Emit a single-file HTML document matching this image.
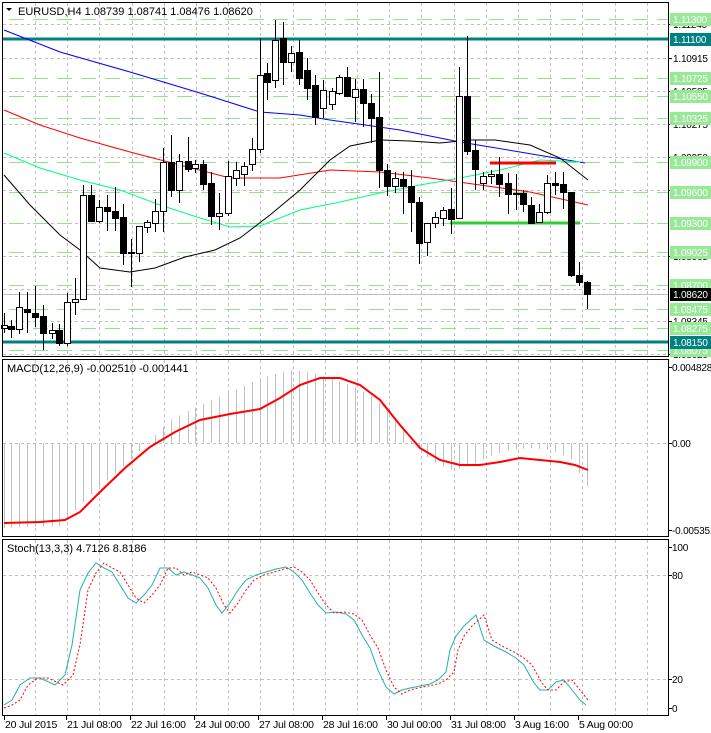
<!DOCTYPE html>
<html><head><meta charset="utf-8"><style>
html,body{margin:0;padding:0;background:#fff;width:711px;height:733px;overflow:hidden}
svg{display:block;font-family:"Liberation Sans",sans-serif}
</style></head><body>
<svg id="s" width="711" height="733" viewBox="0 0 711 733" xmlns="http://www.w3.org/2000/svg">
<rect width="711" height="733" fill="#fff"/>
<g id="grid" stroke="#c0c0c0" stroke-dasharray="3,3" stroke-width="1"></g>
<g id="main"></g>
<g id="labels" font-size="10" letter-spacing="-0.2"></g>
<g fill="none" stroke="#000" stroke-width="1">
<rect x="2.5" y="2.5" width="666" height="354"/>
<rect x="2.5" y="359.5" width="666" height="177"/>
<rect x="2.5" y="539.5" width="666" height="176"/>
</g>
<text x="18" y="15" font-size="11" fill="#000">EURUSD,H4  1.08739 1.08741 1.08476 1.08620</text>
<path d="M6 8 L12 8 L9 11 Z" fill="#000"/>
<text x="7" y="372" font-size="11" fill="#000">MACD(12,26,9) -0.002510 -0.001441</text>
<text x="7" y="552" font-size="11" fill="#000">Stoch(13,3,3) 4.7126 8.8186</text>
</svg>
<script>
const S=document.getElementById('s');
const NS='http://www.w3.org/2000/svg';
function el(p,t,a,txt){const e=document.createElementNS(NS,t);for(const k in a)e.setAttribute(k,a[k]);if(txt!==undefined)e.textContent=txt;(typeof p==='string'?document.getElementById(p):p).appendChild(e);return e;}
const grid='grid',main='main',lab='labels';
for(let i=0;i<20;i++){const x=Math.round(35+32.2*i)+.5;if(x>668)break;
 el(grid,'line',{x1:x,y1:3,x2:x,y2:356});el(grid,'line',{x1:x,y1:360,x2:x,y2:536});el(grid,'line',{x1:x,y1:540,x2:x,y2:715});}
const gy=[24,58,91,124,157,190,223,256,289,321,354];
gy.forEach(y=>el(grid,'line',{x1:3,y1:y+.5,x2:668,y2:y+.5}));
[443,575,679].forEach(y=>el(grid,'line',{x1:3,y1:y+.5,x2:668,y2:y+.5}));
[19,78,96,118,162,192,223,252,285,309,328,350].forEach(y=>el(main,'line',{x1:3,y1:y+.5,x2:668,y2:y+.5,stroke:'#90e090','stroke-width':1,'stroke-dasharray':'15,9','stroke-dashoffset':'-6'}));
el(main,'line',{x1:3,y1:294.5,x2:668,y2:294.5,stroke:'#c0c0c0'});
[39,342].forEach(y=>el(main,'line',{x1:3,y1:y,x2:668,y2:y,stroke:'#008080','stroke-width':3}));
function poly(pts,attrs){el(main,'polyline',Object.assign({points:pts.map(p=>p.join(',')).join(' '),fill:'none'},attrs));}
poly([[4,30],[60,52],[130,72],[200,93],[260,112],[300,115],[330,120],[400,130],[460,142],[520,152],[585,163]],{stroke:'#0000ff','stroke-width':1});
poly([[4,110],[40,125],[80,138],[130,152],[180,165],[230,178],[280,178],[330,170],[380,172],[430,178],[480,185],[530,192],[588,205]],{stroke:'#ff0000','stroke-width':1});
poly([[4,153],[40,168],[80,180],[120,190],[160,205],[200,218],[230,227],[260,226],[300,210],[340,202],[380,193],[420,185],[460,178],[500,170],[540,160],[580,162]],{stroke:'#00ff7f','stroke-width':1});
poly([[4,175],[30,205],[60,235],[80,250],[100,268],[130,272],[155,268],[185,257],[215,250],[240,238],[270,215],[300,190],[330,160],[350,146],[380,140],[410,141],[440,143],[470,140],[495,140],[530,145],[560,158],[588,180]],{stroke:'#000','stroke-width':1});
el(main,'line',{x1:490,y1:163,x2:556,y2:163,stroke:'#ff0000','stroke-width':3});
el(main,'line',{x1:450,y1:223,x2:580,y2:223,stroke:'#32cd32','stroke-width':3});
const C=[[4,325,328,313,333,1],[11,326,329,320,338,0],[19,307,329,292,334,1],[27,309,312,292,333,0],[35,313,317,286,327,0],[43,316,333,305,350,0],[52,330,333,323,339,1],[59,330,343,324,346,0],[67,302,343,293,346,1],[75,299,302,278,315,1],[83,195,299,185,300,1],[91,195,221,185,222,0],[99,207,221,200,223,1],[107,207,211,195,231,0],[115,211,218,187,231,0],[123,217,253,204,265,0],[131,252,253,239,287,0],[139,226,253,226,262,1],[147,222,227,220,233,1],[155,211,223,199,232,1],[163,162,211,148,232,1],[171,162,190,135,197,0],[179,161,190,154,203,1],[188,161,169,137,172,0],[195,164,168,160,173,1],[203,164,184,160,190,0],[211,183,216,172,225,0],[219,213,216,193,230,1],[228,176,213,161,216,1],[236,170,178,162,186,1],[244,166,174,162,186,1],[252,149,164,138,171,1],[260,75,149,38,153,1],[267,73,82,63,100,0],[275,40,80,20,88,1],[283,38,62,22,85,0],[291,53,62,46,72,1],[299,52,78,40,85,0],[307,70,88,58,100,0],[315,85,117,75,125,0],[323,90,108,80,118,1],[332,91,104,88,110,1],[339,77,93,75,95,1],[347,77,96,67,97,0],[355,89,97,79,122,1],[363,89,103,79,127,0],[371,103,118,94,143,0],[379,117,170,72,188,0],[387,170,186,164,196,0],[395,178,186,172,193,1],[403,179,186,172,214,0],[411,186,202,170,232,0],[419,202,243,197,264,0],[427,223,242,223,256,1],[435,217,223,212,228,1],[443,210,218,207,226,1],[451,209,219,188,234,0],[459,96,218,67,219,1],[467,96,151,36,155,0],[475,150,169,140,190,0],[483,176,183,172,190,1],[491,174,176,170,184,1],[499,174,184,157,197,0],[508,183,194,173,214,0],[516,193,194,174,210,0],[523,193,204,190,212,0],[531,205,223,197,223,0],[539,212,222,204,223,1],[547,183,212,175,214,1],[555,183,185,172,195,0],[563,184,192,172,209,0],[571,192,275,192,277,0],[579,275,282,262,286,0],[587,282,294,281,309,0]];
C.forEach(c=>{const[x,t,b,h,l,u]=c;
 el(main,'line',{x1:x+.5,y1:h,x2:x+.5,y2:l,stroke:'#000'});
 el(main,'rect',{x:x-2.5,y:t+.5,width:6,height:Math.max(b-t,1),fill:u?'#fff':'#000',stroke:'#000'});});
function interp(k,x){for(let i=0;i<k.length-1;i++){if(x>=k[i][0]&&x<=k[i+1][0]){const f=(x-k[i][0])/(k[i+1][0]-k[i][0]);return k[i][1]+f*(k[i+1][1]-k[i][1]);}}return k[k.length-1][1];}
const mk=[[4,528],[60,526],[70,515],[90,495],[110,478],[130,460],[150,440],[170,420],[200,405],[230,392],[250,383],[270,375],[290,370],[310,372],[330,378],[350,385],[370,395],[390,412],[410,440],[430,460],[450,470],[470,466],[490,456],[510,450],[530,448],[550,450],[570,458],[588,488]];
C.forEach(c=>{const x=c[0]+.5;const y=interp(mk,c[0]);el(main,'line',{x1:x,y1:443,x2:x,y2:y,stroke:'#c0c0c0'});});
poly([[4,523],[40,522],[65,520],[80,512],[100,492],[125,468],[150,447],[175,432],[200,420],[230,414],[260,409],[280,398],[300,385],[320,378],[340,378],[360,385],[380,400],[400,425],[420,448],[440,460],[460,465],[480,465],[500,462],[520,458],[540,460],[560,462],[575,465],[588,470]],{stroke:'#ff0000','stroke-width':2});
const st=[[4,705],[12,700],[20,685],[30,678],[40,678],[55,685],[65,675],[72,645],[80,590],[88,573],[96,563],[104,568],[112,572],[120,585],[128,598],[136,603],[144,595],[152,585],[160,568],[168,568],[176,575],[184,572],[192,575],[200,578],[208,588],[216,605],[222,613],[230,603],[238,590],[246,580],[256,575],[266,572],[276,569],[286,567],[294,572],[302,580],[310,593],[318,605],[326,613],[336,612],[346,614],[354,620],[362,635],[370,648],[378,670],[386,687],[394,694],[402,690],[410,688],[420,686],[430,684],[438,680],[446,672],[450,650],[456,636],[464,626],[476,615],[484,640],[494,646],[506,652],[516,658],[524,665],[534,683],[540,690],[548,690],[556,682],[564,680],[572,690],[580,700],[586,705]];
poly(st,{stroke:'#20b2aa','stroke-width':1});
const sg=st.map(p=>[p[0]+8,p[1]]).filter(p=>p[0]<=590);sg.unshift([4,708]);
poly(sg,{stroke:'#ff0000','stroke-width':1,'stroke-dasharray':'2,2'});
[[24,'1.11240'],[58,'1.10915'],[91,'1.10585'],[124,'1.10275'],[157,'1.09950'],[190,'1.09620'],[256,'1.08965'],[321,'1.08345'],[354,'1.08020']].forEach(([y,t])=>{el(lab,'line',{x1:668,y1:y+.5,x2:672,y2:y+.5,stroke:'#000'});el(lab,'text',{x:673,y:y+4,fill:'#000'},t);});
[[19,'1.11300','#98e898','#fff'],[78,'1.10725','#98e898','#fff'],[96,'1.10550','#98e898','#fff'],[118,'1.10325','#98e898','#fff'],[162,'1.09900','#98e898','#fff'],[192,'1.09600','#98e898','#fff'],[223,'1.09300','#98e898','#fff'],[252,'1.09025','#98e898','#fff'],[285,'1.08700','#98e898','#fff'],[309,'1.08475','#98e898','#fff'],[328,'1.08275','#98e898','#fff'],[350,'1.08075','#98e898','#fff'],[39,'1.11100','#008080','#fff'],[342,'1.08150','#008080','#fff'],[294,'1.08620','#000','#fff']].forEach(([y,t,bg,fg])=>{el(lab,'rect',{x:670,y:y-6,width:41,height:13,fill:bg});el(lab,'text',{x:673,y:y+4,fill:fg},t);});
[[367,'0.004828'],[443,'0.00'],[530,'-0.005351'],[547,'100'],[575,'80'],[679,'20'],[708,'0']].forEach(([y,t])=>{el(lab,'line',{x1:668,y1:y+.5,x2:672,y2:y+.5,stroke:'#000'});el(lab,'text',{x:672,y:y+4,fill:'#000'},t);});
[[4,'20 Jul 2015'],[66,'21 Jul 08:00'],[130,'22 Jul 16:00'],[194,'24 Jul 00:00'],[258,'27 Jul 08:00'],[322,'28 Jul 16:00'],[386,'30 Jul 00:00'],[450,'31 Jul 08:00'],[514,'3 Aug 16:00'],[578,'5 Aug 00:00']].forEach(([x,t])=>{el(lab,'line',{x1:x+.5,y1:716,x2:x+.5,y2:720,stroke:'#000'});el(lab,'text',{x:x+1,y:728,fill:'#000','font-size':'10.5'},t);});
</script>
</body></html>
